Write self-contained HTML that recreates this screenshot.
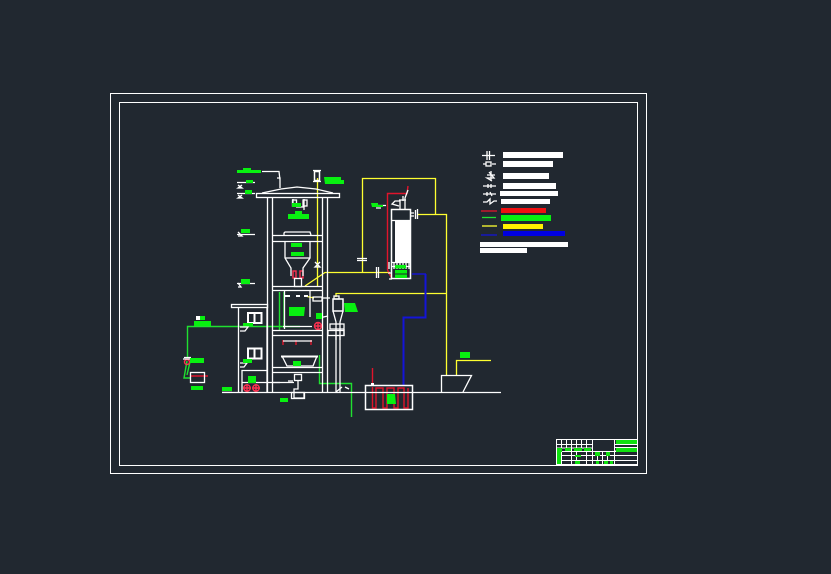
<!DOCTYPE html>
<html><head><meta charset="utf-8"><style>
html,body{margin:0;padding:0;background:#212830;width:831px;height:574px;overflow:hidden}
svg{display:block}
</style></head><body>
<svg width="831" height="574" viewBox="0 0 831 574" xmlns="http://www.w3.org/2000/svg">
<rect width="831" height="574" fill="#212830"/>
<!-- frames -->
<g fill="none" stroke="#fff" stroke-width="1">
<rect x="110.5" y="93.5" width="536" height="380"/>
<rect x="119.5" y="102.5" width="518" height="363"/>
</g>
<!-- yellow pipes -->
<g fill="none" stroke="#ffff30" stroke-width="1.300">
<path d="M362.500 272V178.500H435.500V214"/>
<path d="M417 214.500H446.500V375"/>
<path d="M317.500 178V286"/>
<path d="M305 286L325 272.500H390"/>
<path d="M336 297V293.500H446"/>
<path d="M456.500 375V360.500H491"/>
<path d="M305 296L314 298"/>
</g>
<!-- green pipes -->
<g fill="none" stroke="#20e030" stroke-width="1.400">
<path d="M187.500 358V326.500H300"/>
<path d="M279.500 292V330"/>
<path d="M284 292V328"/>
<path d="M319.500 355V383.500H351.500V417"/>
<path d="M187 361L184 378H190"/>
<path d="M190 362L187 375"/>
</g>
<!-- blue pipe -->
<path d="M425.500 274V317.500H403.500V385" fill="none" stroke="#1414d8" stroke-width="2"/>
<path d="M412 274H426" fill="none" stroke="#1414d8" stroke-width="1.400"/>
<!-- red -->
<g fill="none" stroke="#e0142c" stroke-width="1.400">
<path d="M387.500 270V193.500H407L408 186"/>
<path d="M387.500 270L392 279"/>
<path d="M372.500 368V386"/>
<path d="M372.500 387V408H376V388H383V408H387V388H394V408H398V388H404V408H408V388"/>
<path d="M191 376H208"/>
<path d="M283 340V345M296 340V345M311 340V345"/>
</g>
<g fill="none" stroke="#ff3050" stroke-width="1.400">
<circle cx="247" cy="388" r="3.200"/><path d="M243 388h8M247 384v8"/>
<circle cx="256" cy="388" r="3.200"/><path d="M252 388h8M256 384v8"/>
<circle cx="318" cy="326" r="3.500"/><path d="M314 326h8M318 322v8"/>
<circle cx="187" cy="362" r="2.500"/>
<rect x="293" y="271" width="3" height="7"/><rect x="300" y="271" width="3" height="7"/>
</g>
<!-- white structure -->
<g fill="none" stroke="#fff" stroke-width="1.300">
<path d="M222 392.500H501"/>
<!-- tower -->
<path d="M267.500 198V392M272.500 198V392M322.500 198V392M327.500 198V392"/>
<rect x="256.500" y="193.500" width="83" height="4"/>
<path d="M262 193L281 189L297 187L316 189L333 193"/>
<path d="M272 235.500H322M272 241.500H322"/>
<path d="M284 235V233L285 232H310L311 235"/>
<path d="M285 241V258L291 268V276M310 241V258L303 268V276M285 258H310"/>
<rect x="294.500" y="278.500" width="7" height="8"/>
<path d="M272 286.500H322M272 290.500H322"/>
<path d="M284.500 291V329M310 291V317"/>
<path d="M285 296H290M296 296H300M304 296H308" stroke-width="2"/>
<path d="M272 330.500H322M272 335.500H322M283 326.500H312"/>
<path d="M283 341H312"/>
<path d="M281 356.500H318" stroke-width="2"/>
<path d="M282 356L287 366H313L317 356"/>
<path d="M272 367.500H322M272 372.500H322"/>
<rect x="294.500" y="374.500" width="7" height="6"/>
<path d="M298 381V389H294V398H304M288 381H293M304 392V398"/>
<rect x="291.500" y="392.500" width="13" height="6"/>
<path d="M272 382.500H294"/>
<path d="M293 199V207M304 199V207"/>
<rect x="292.500" y="200" width="4" height="6"/><rect x="303" y="200" width="4" height="6"/>
<path d="M296 207H304V210"/>
<!-- building -->
<rect x="231.500" y="304.500" width="36" height="3"/>
<path d="M238.500 308V392M267 308V392"/>
<rect x="248" y="313" width="13.500" height="10" stroke-width="2"/><path d="M254.500 313V323" stroke-width="2"/>
<rect x="248" y="348.500" width="13.500" height="10" stroke-width="2"/><path d="M254.500 348V359" stroke-width="2"/>
<path d="M242 392V370.500H267M242 382.500H280"/>
<path d="M240 327H248L245 331H240M240 363H247L244 367H240"/>
<!-- cyclone -->
<rect x="333" y="299" width="10" height="12" stroke-width="1.500"/>
<path d="M333 311L336 322V340M343 311L340 322V340"/>
<rect x="334" y="296" width="5" height="3"/>
<rect x="330" y="324" width="14" height="5"/>
<rect x="328" y="330.500" width="16" height="5"/>
<path d="M336 336V392M340 336V392M344 329V336"/>
<rect x="313" y="297" width="9" height="4"/>
<path d="M322 298L330 298"/>
<path d="M319 318L328 316"/>
<path d="M336 392L342 387M345 387L349 389"/>
<!-- top-left run -->
<path d="M262 171.500H279L280 180M277 178H280V188"/>
<!-- level marks -->
<path d="M237 182.500H255M237 193.500H255M237 234.500H255M237 283.500H255"/>
<path d="M238 185L242 188H238L242 185M238 195L242 198H238L242 195M238 232L242 236H238M238 283L241 287H238"/>
<!-- valve cap -->
<rect x="314.500" y="171.500" width="5" height="9" stroke-width="1.500"/>
<path d="M313 170.500H321M313 181.500H321"/>
<path d="M315 262L320 267H315L320 262"/>
<!-- yellow pipe flange -->
<path d="M357 258.500H367M357 260.500H367"/>
<path d="M376.500 267V278M378.500 267V278"/>
<path d="M417.500 209V219M415.500 210V219"/>
<!-- bag filter -->
<rect x="391.500" y="209.500" width="19" height="69" stroke-width="1.500"/>
<path d="M391 220.500H411M391 262.500H411M391 266.500H411"/>
<rect x="395" y="220" width="16" height="42" fill="#fff" stroke="none"/>
<path d="M394 263V269M397 263V269M400 263V269M403 263V269M406 263V269M409 263V269"/>
<path d="M389 269V262"/>
<path d="M388 273H392M389 279H392"/>
<path d="M400 209V201H395L392 204L399 206M403 201V196M405 209V198L408 190M399 200H406"/>
<path d="M411 213H414M411 216H414"/>
<path d="M376 205.500H386M376 208H381"/>
<!-- ducts and tanks -->
<rect x="365.500" y="385.500" width="47" height="24" stroke-width="1.500"/>
<rect x="371" y="383" width="3" height="3" fill="#fff" stroke="none"/>
<path d="M441.500 392V375.500H471.500L463 392"/>
<!-- left small unit -->
<rect x="190.500" y="372.500" width="14" height="10"/>
<path d="M184 357.500H191M183 359H191"/>
<path d="M222 390.500H232"/>
<!-- legend symbols -->
<path d="M489.500 151V160M487 151V160M482 155.500H495"/>
<path d="M483 164H486M492 164H496"/><rect x="486" y="162" width="5" height="4"/>
<path d="M491 171V181M487 175H495M489 172L494 178H487L492 181"/>
<path d="M483 186H496M488 184V188M491 184V188"/>
<path d="M483 194H496M487 192V196M490 192L492 196"/>
<path d="M483 202H487L490 199V204L494 201H497"/>
</g>
<!-- title block -->
<g fill="none" stroke="#fff" stroke-width="1">
<rect x="556.500" y="439.500" width="81" height="25"/>
<path d="M556 444.500H592M556 448H592M556 451.500H637M556 455.500H637M556 460.500H637M592.500 439V465"/>
<path d="M561.500 439V465M566.500 439V451M571.500 439V465M576.500 439V465M581.500 439V451M586.500 439V465M597.500 452V465M602.500 452V465M607.500 452V465M614.500 439V465"/>
<path d="M615 444.500H637M615 451H637M614 447.500H637"/>
</g>
<g fill="#10e010">
<rect x="616" y="440" width="21" height="4"/><rect x="616" y="448" width="21" height="4"/>
<rect x="557" y="448" width="5" height="4"/><rect x="565" y="448" width="6" height="3"/><rect x="574" y="448" width="8" height="3"/><rect x="584" y="448" width="7" height="3"/>
<rect x="557" y="452" width="4" height="12"/><rect x="575" y="455" width="6" height="2"/><rect x="575" y="461" width="5" height="3"/>
<rect x="595" y="452" width="5" height="4"/><rect x="606" y="452" width="4" height="4"/>
<rect x="596" y="461" width="3" height="3"/><rect x="604" y="461" width="4" height="3"/><rect x="610" y="461" width="3" height="3"/>
</g>
<!-- green labels -->
<g fill="#08f010">
<path d="M237 170H243V168H251V170H261V173H237Z"/>
<rect x="246" y="180" width="7" height="3"/>
<rect x="245" y="190" width="7" height="4"/>
<rect x="241" y="229" width="9" height="4"/>
<rect x="241" y="279" width="9" height="5"/>
<path d="M324 177H341V180H344V184H325Z"/>
<rect x="292" y="203" width="9" height="4"/>
<path d="M291 214H295V211H302V214H309V219H288V214Z"/>
<rect x="291" y="243" width="11" height="4"/>
<rect x="291" y="252" width="13" height="4"/>
<path d="M289 307H305L304 316H289Z"/>
<path d="M316 313H322V319H316Z"/>
<path d="M344 303H355L358 312H345Z"/>
<rect x="194" y="321" width="17" height="5"/>
<rect x="199" y="316" width="6" height="4"/>
<rect x="243" y="323" width="10" height="3"/>
<rect x="190" y="358" width="14" height="5"/>
<rect x="243" y="359" width="9" height="4"/>
<rect x="248" y="376" width="8" height="7"/>
<rect x="191" y="386" width="12" height="4"/>
<rect x="222" y="387" width="10" height="4"/>
<rect x="293" y="361" width="8" height="5"/>
<rect x="280" y="398" width="8" height="4"/>
<path d="M371 203H378V205H383V207H372Z"/>
<rect x="395" y="265" width="11" height="3.500"/>
<rect x="395" y="270" width="12" height="3.500"/>
<rect x="395" y="274.500" width="12" height="3.500"/>
<path d="M387 394H391V404H387ZM391 394H395L396 404H391Z"/>
<rect x="460" y="352" width="10" height="6"/>
<rect x="501" y="215" width="50" height="6"/>
</g>
<rect x="196" y="316" width="4" height="4" fill="#fff"/>
<!-- legend bars -->
<g fill="#fff">
<rect x="503" y="152" width="60" height="6"/>
<rect x="503" y="161" width="50" height="6"/>
<rect x="503" y="173" width="46" height="6"/>
<rect x="503" y="183" width="53" height="6"/>
<rect x="500" y="191" width="58" height="5"/>
<rect x="501" y="199" width="49" height="5"/>
<rect x="480" y="242" width="88" height="5"/>
<rect x="480" y="248" width="47" height="5"/>
</g>
<rect x="501" y="208" width="45" height="5" fill="#f01010"/>
<rect x="503" y="224" width="40" height="5" fill="#fff200"/>
<rect x="503" y="231" width="62" height="5" fill="#0000e0"/>
<g stroke-width="1.300" fill="none">
<path d="M481 211H497" stroke="#e0142c"/>
<path d="M482 217.500H496" stroke="#20e030"/>
<path d="M482 226H497" stroke="#ffff30"/>
<path d="M481 235H497" stroke="#1414d8"/>
</g>
</svg>
</body></html>
